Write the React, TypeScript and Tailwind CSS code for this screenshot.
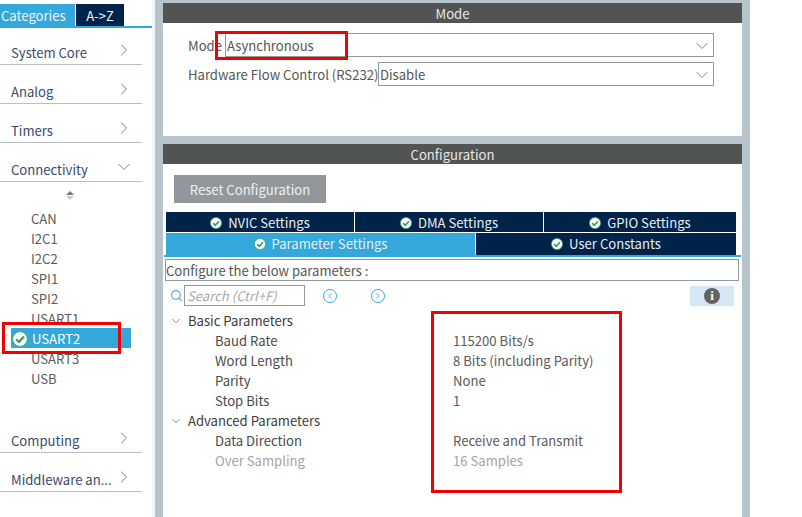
import { ChevronDown, ChevronRight, ChevronLeft, Search } from 'lucide-react';

const FONT = "font-['Noto_Sans_CJK_SC','Noto_Sans',sans-serif]";

// small white disc with green tick used on tabs and the selected peripheral
function CheckBadge({ size = 12 }: { size?: number }) {
  return (
    <svg width={size} height={size} viewBox="0 0 16 16" className="shrink-0">
      <circle cx="8" cy="8" r="7.4" fill="#ffffff" stroke="#3aa76d" strokeWidth="1" />
      <path d="M4.2 8.2 7 11l5-5.4" fill="none" stroke="#2e9e62" strokeWidth="2.2" />
    </svg>
  );
}

function Category({ label, open }: { label: string; open?: boolean }) {
  return (
    <div className="flex h-[39px] w-[142px] items-end justify-between whitespace-nowrap border-b border-[#b5c0c8] pb-[1px] pl-[11px] pr-[8px] text-[13.1px] leading-[20px] text-[#39496f]">
      <span>{label}</span>
      {open ? (
        <ChevronDown size={20} strokeWidth={1.1} className="mb-[3px] text-[#6b7177]" />
      ) : (
        <ChevronRight size={20} strokeWidth={1.1} className="mb-[3px] text-[#6b7177]" />
      )}
    </div>
  );
}

function ParamRow({ label, value, muted }: { label: string; value?: string; muted?: boolean }) {
  return (
    <div className={`flex h-5 items-center pl-[52px] pt-px ${muted ? 'text-[#a3a3a3]' : 'text-[#4a4a4a]'}`}>
      <span className="w-[238px]">{label}</span>
      <span className={muted ? '' : 'text-[#5a5a5a]'}>{value}</span>
    </div>
  );
}

function Group({ label }: { label: string }) {
  return (
    <div className="flex h-5 items-center gap-[5px] pl-[6px] pt-px text-[#3c3c3c]">
      <ChevronDown size={14} strokeWidth={1.1} className="text-[#555]" />
      <span>{label}</span>
    </div>
  );
}

function Tab({ label, width, active }: { label: string; width: string; active?: boolean }) {
  return (
    <div
      className={`flex h-full items-center justify-center gap-[6px] text-[#e9eef3] ${width} ${
        active ? 'bg-[#34a7db]' : 'bg-[#002349]'
      }`}
    >
      <CheckBadge />
      <span>{label}</span>
    </div>
  );
}

function SelectBox({ value, width }: { value: string; width: string }) {
  return (
    <div className={`flex h-6 items-center justify-between border border-[#92989c] pl-[1px] pr-[1px] pt-px text-[#555] ${width}`}>
      <span>{value}</span>
      <ChevronDown size={20} strokeWidth={1.1} className="text-[#777]" />
    </div>
  );
}

export default function App() {
  const peripherals = ['CAN', 'I2C1', 'I2C2', 'SPI1', 'SPI2', 'USART1', 'USART2', 'USART3', 'USB'];

  return (
    <div className={`relative flex h-[517px] w-[802px] overflow-hidden bg-white text-[13.1px] ${FONT}`}>
      {/* left category list */}
      <div className="w-[152px] shrink-0">
        <div className="mt-1 flex h-[22px] items-start gap-px">
          <div className="flex h-[22px] w-[75px] items-center bg-[#34a7db] pl-px pt-px text-[#eef6fb]">Categories</div>
          <div className="flex h-[22px] w-[48px] items-center justify-center bg-[#002349] pt-px text-[#eef2f6]">A-&gt;Z</div>
        </div>
        <div className="h-[2px] w-[154px] bg-[#34a7db]" />
        <div className="-mt-[2px]">
          <Category label="System Core" />
          <Category label="Analog" />
          <Category label="Timers" />
          <Category label="Connectivity" open />
        </div>
        <div className="flex h-[26px] w-[140px] flex-col items-center justify-center gap-[1px]">
          <div className="h-0 w-0 border-x-[4px] border-b-[4px] border-x-transparent border-b-[#777]" />
          <div className="h-0 w-0 border-x-[4px] border-t-[4px] border-x-transparent border-t-[#ccc]" />
        </div>
        <div>
          {peripherals.map((p) =>
            p === 'USART2' ? (
              <div key={p} className="ml-[11px] flex h-5 w-[120px] items-center gap-[4px] bg-[#34a7db] pl-[1px] pt-px text-white">
                <CheckBadge size={16} />
                <span>{p}</span>
              </div>
            ) : (
              <div key={p} className="flex h-5 items-center pl-[31px] pt-px text-[#5c5c5c]">
                {p}
              </div>
            ),
          )}
        </div>
        <div className="mt-[26px]">
          <Category label="Computing" />
          <Category label="Middleware an..." />
        </div>
      </div>

      {/* gutter */}
      <div className="w-[3px] shrink-0 bg-[#f3f5f6]" />
      <div className="w-2 shrink-0 bg-[#b8c4cc]" />

      {/* centre panels */}
      <div className="flex w-[579px] shrink-0 flex-col bg-[#b8c4cc] pt-[3px]">
        <div className="flex h-5 items-center justify-center bg-[#525453] pt-px text-[#e8e8e8]">Mode</div>
        <div className="flex h-[113px] flex-col gap-[5px] bg-white pl-[25px] pt-[10px] text-[#555]">
          <div className="flex items-center">
            <span className="w-[37px] pt-px">Mode</span>
            <SelectBox value="Asynchronous" width="w-[489px]" />
          </div>
          <div className="flex items-center">
            <span className="w-[190px] whitespace-nowrap pt-px">Hardware Flow Control (RS232)</span>
            <SelectBox value="Disable" width="w-[336px]" />
          </div>
        </div>

        <div className="mt-2 flex h-5 items-center justify-center bg-[#525453] pt-px text-[#e8e8e8]">Configuration</div>
        <div className="flex-1 bg-white">
          <div className="ml-[11px] mt-[11px] flex h-[28px] w-[152px] items-center justify-center bg-[#92979c] pt-px text-[#f0f0f0]">
            Reset Configuration
          </div>

          <div className="ml-[3px] mt-[9px] flex h-5 w-[570px] gap-px">
            <Tab label="NVIC Settings" width="w-[188px] pt-px" />
            <Tab label="DMA Settings" width="w-[188px] pt-px" />
            <Tab label="GPIO Settings" width="w-[192px] pt-px" />
          </div>
          <div className="ml-[3px] mt-px flex h-[22px] w-[570px] gap-px">
            <Tab label="Parameter Settings" width="w-[309px] pb-px" active />
            <Tab label="User Constants" width="w-[260px] pb-px" />
          </div>
          <div className="ml-px h-[2px] w-[577px] bg-[#34a7db]" />

          <div className="ml-[2px] mt-[2px] flex h-[22px] w-[574px] items-center border border-[#92989c] pt-px text-[#555]">
            Configure the below parameters :
          </div>

          <div className="mt-[4px] flex h-[21px] items-center">
            <Search size={13} strokeWidth={2} className="ml-[7px] text-[#34a7db]" />
            <div className="ml-px flex h-[21px] w-[121px] items-center border border-[#92989c] pl-[2px] italic text-[#a8a8a8]">
              Search (Ctrl+F)
            </div>
            <div className="ml-[18px] flex h-[14px] w-[14px] items-center justify-center rounded-full border border-[#34a7db] text-[#34a7db]">
              <ChevronLeft size={10} strokeWidth={2} />
            </div>
            <div className="ml-[34px] flex h-[14px] w-[14px] items-center justify-center rounded-full border border-[#34a7db] text-[#34a7db]">
              <ChevronRight size={10} strokeWidth={2} />
            </div>
            <div className="ml-[305px] flex h-5 w-11 items-center justify-center bg-[#d6e6f4]">
              <div className="flex h-4 w-4 items-center justify-center rounded-full bg-[#636363] font-['Liberation_Serif',serif] text-[13px] font-bold text-white">
                i
              </div>
            </div>
          </div>

          <div className="mt-[4px]">
            <Group label="Basic Parameters" />
            <ParamRow label="Baud Rate" value="115200 Bits/s" />
            <ParamRow label="Word Length" value="8 Bits (including Parity)" />
            <ParamRow label="Parity" value="None" />
            <ParamRow label="Stop Bits" value="1" />
            <Group label="Advanced Parameters" />
            <ParamRow label="Data Direction" value="Receive and Transmit" />
            <ParamRow label="Over Sampling" value="16 Samples" muted />
          </div>
        </div>
      </div>

      {/* right edge */}
      <div className="w-2 shrink-0 bg-[#b8c4cc]" />

      {/* red annotation boxes drawn on top of the screenshot */}
      <div className="absolute left-[215px] top-[31px] h-[29px] w-[133px] border-[3px] border-[#f00000]" />
      <div className="absolute left-[2px] top-[322px] h-[32px] w-[119px] border-[3px] border-[#f00000]" />
      <div className="absolute left-[431px] top-[311px] h-[182px] w-[191px] border-[3px] border-[#f00000]" />
    </div>
  );
}
